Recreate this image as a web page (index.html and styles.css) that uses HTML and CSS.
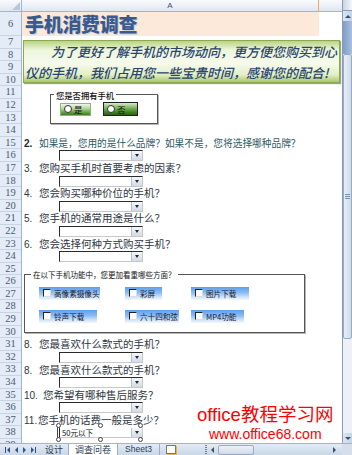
FILE: index.html
```html
<!DOCTYPE html>
<html lang="zh-CN">
<head>
  <meta charset="UTF-8">
  <title>手机消费调查</title>
  <link rel="stylesheet" href="styles.css">
</head>
<body>
  <div class="excel">
    <div class="colhead">
      <div class="corner"></div>
      <div class="col-a">A</div>
      <div class="col-rest"></div>
    </div>

    <div class="vscroll">
      <div class="split"></div>
      <div class="sbtn"><span class="tri up"></span></div>
      <div class="track-top"></div>
      <div class="thumb"><span class="grip"></span></div>
      <div class="track-bottom"></div>
      <div class="sbtn"><span class="tri down"></span></div>
    </div>

    <div class="sheet">
      <div class="rowheads">
        <div class="rh big">6</div>
        <div class="rh">7</div>
        <div class="rh">8</div>
        <div class="rh">9</div>
        <div class="rh">10</div>
        <div class="rh">11</div>
        <div class="rh">12</div>
        <div class="rh">13</div>
        <div class="rh">14</div>
        <div class="rh">15</div>
        <div class="rh">16</div>
        <div class="rh">17</div>
        <div class="rh">18</div>
        <div class="rh">19</div>
        <div class="rh">20</div>
        <div class="rh">21</div>
        <div class="rh">22</div>
        <div class="rh">23</div>
        <div class="rh">24</div>
        <div class="rh">25</div>
        <div class="rh">26</div>
        <div class="rh">27</div>
        <div class="rh">28</div>
        <div class="rh">29</div>
        <div class="rh">30</div>
        <div class="rh">31</div>
        <div class="rh">32</div>
        <div class="rh">33</div>
        <div class="rh">34</div>
        <div class="rh">35</div>
        <div class="rh">36</div>
        <div class="rh">37</div>
        <div class="rh">38</div>
        <div class="rh">39</div>
      </div>

      <div class="cells">
        <div class="title-row"><span class="title">手机消费调查</span></div>

        <div class="banner-rows">
          <div class="banner">
            <p class="l1">为了更好了解手机的市场动向，更方便您购买到心</p>
            <p class="l2">仪的手机，我们占用您一些宝贵时间，感谢您的配合!</p>
          </div>
        </div>

        <div class="group-rows">
          <fieldset class="grp own">
            <legend>您是否拥有手机</legend>
            <div class="opts">
              <div class="opt"><span class="radio"></span>是</div>
              <div class="opt on"><span class="radio"></span>否</div>
            </div>
          </fieldset>
        </div>

        <div class="row"></div>
        <div class="row q first"><b class="n">2.</b>如果是，您用的是什么品牌？如果不是，您将选择哪种品牌？</div>
        <div class="row"><div class="combo"><span class="val"></span><span class="arrow"></span></div></div>
        <div class="row q"><span class="n">3.</span>您购买手机时首要考虑的因素？</div>
        <div class="row"><div class="combo"><span class="val"></span><span class="arrow"></span></div></div>
        <div class="row q"><span class="n">4.</span>您会购买哪种价位的手机？</div>
        <div class="row"><div class="combo"><span class="val"></span><span class="arrow"></span></div></div>
        <div class="row q"><span class="n">5.</span>您手机的通常用途是什么？</div>
        <div class="row"><div class="combo"><span class="val"></span><span class="arrow"></span></div></div>
        <div class="row q"><span class="n">6.</span>您会选择何种方式购买手机？</div>
        <div class="row"><div class="combo"><span class="val"></span><span class="arrow"></span></div></div>

        <div class="func-rows">
          <fieldset class="grp func">
            <legend>在以下手机功能中，您更加看重哪些方面？</legend>
            <div class="checks">
              <div class="chk"><span class="box"></span>高像素摄像头</div>
              <div class="chk"><span class="box"></span>彩屏</div>
              <div class="chk"><span class="box"></span>图片下载</div>
              <div class="chk"><span class="box"></span>铃声下载</div>
              <div class="chk"><span class="box"></span>六十四和弦</div>
              <div class="chk"><span class="box"></span>MP4功能</div>
            </div>
          </fieldset>
        </div>

        <div class="row q"><span class="n">8.</span>您最喜欢什么款式的手机？</div>
        <div class="row"><div class="combo"><span class="val"></span><span class="arrow"></span></div></div>
        <div class="row q"><span class="n">8.</span>您最喜欢什么款式的手机？</div>
        <div class="row"><div class="combo"><span class="val"></span><span class="arrow"></span></div></div>
        <div class="row q"><span class="n wide">10.</span>您希望有哪种售后服务？</div>
        <div class="row"><div class="combo"><span class="val"></span><span class="arrow"></span></div></div>
        <div class="row q"><span class="n tight">11.</span>您手机的话费一般是多少？</div>
        <div class="row">
          <div class="combo selected">
            <span class="val">50元以下</span><span class="arrow"></span>
            <i class="h tl"></i><i class="h tc"></i><i class="h tr"></i>
            <i class="h bl"></i><i class="h bc"></i><i class="h br"></i>
          </div>
        </div>
        <div class="row"></div>
      </div>
    </div>

    <div class="tabbar">
      <div class="nav">
        <span class="nv first"></span>
        <span class="nv prev"></span>
        <span class="nv next"></span>
        <span class="nv last"></span>
      </div>
      <div class="tab">设计</div>
      <div class="tab active">调查问卷</div>
      <div class="tab sheet3">Sheet3</div>
      <div class="tab add"><span class="newsheet"></span></div>
      <div class="hscroll">
        <span class="hsplit"></span>
        <span class="tri left"></span>
        <span class="hthumb"></span>
        <span class="htrack"></span>
        <span class="tri right"></span>
      </div>
      <div class="corner-box"></div>
    </div>

    <div class="watermark">
      <div class="wm-big">office教程学习网</div>
      <div class="wm-url">www.office68.com</div>
    </div>
  </div>
</body>
</html>
```

FILE: styles.css
```css
body {
  margin: 0;
  background: #fff;
  font-family: "Noto Sans CJK SC", sans-serif;
}

.excel {
  width: 352px;
  height: 455px;
  display: grid;
  grid-template-columns: 342px 10px;
  grid-template-rows: 12px 431px 12px;
  overflow: hidden;
  position: relative;
}

/* small triangles used by scroll bars and sheet navigation */
.tri {
  width: 0;
  height: 0;
  border-style: solid;
  border-color: transparent;
}

.tri.up { border-width: 0 3px 3px 3px; border-bottom-color: #3c4f6b; }
.tri.down { border-width: 3px 3px 0 3px; border-top-color: #3c4f6b; }
.tri.left { border-width: 3px 3px 3px 0; border-right-color: #3c4f6b; }
.tri.right { border-width: 3px 0 3px 3px; border-left-color: #3c4f6b; }

/* column header */
.colhead {
  grid-column: 1;
  grid-row: 1;
  display: flex;
  background: linear-gradient(#f9fbfd, #dfe7f1);
  border-bottom: 1px solid #9eb6ce;
  box-sizing: border-box;
}

.corner {
  width: 22px;
  border-right: 1px solid #9eb6ce;
  box-sizing: border-box;
  display: flex;
  justify-content: flex-end;
  align-items: flex-end;
}

.corner::after {
  content: "";
  border-style: solid;
  border-width: 0 0 8px 8px;
  border-color: transparent transparent #b8c8dc transparent;
  margin: 0 1px 1px 0;
}

.col-a {
  width: 297px;
  text-align: center;
  font: 8px "Liberation Sans", sans-serif;
  line-height: 11px;
  color: #3f5068;
  border-right: 1px solid #f0a862;
  box-sizing: border-box;
}

.col-rest {
  flex: 1;
}

/* vertical scroll bar */
.vscroll {
  grid-column: 2;
  grid-row: 1 / 3;
  display: flex;
  flex-direction: column;
  background: #e9eef5;
  border-left: 1px solid #8a9bb3;
  box-sizing: border-box;
}

.split {
  height: 10px;
  background: linear-gradient(90deg, #c9d5e4, #f4f7fb);
  border-bottom: 1px solid #8a9bb3;
}

.sbtn {
  height: 10px;
  display: flex;
  align-items: center;
  justify-content: center;
  background: linear-gradient(90deg, #dce6f2, #c4d3e6);
}

.track-top {
  height: 33px;
  background: linear-gradient(90deg, #7e9cc6, #a9c0de);
}

.thumb {
  height: 285px;
  background: linear-gradient(90deg, #e8eef6, #cfdbea);
  border: 1px solid #98abc4;
  border-radius: 2px;
  box-sizing: border-box;
  display: flex;
  align-items: center;
  justify-content: center;
}

.grip {
  width: 5px;
  height: 5px;
  background: repeating-linear-gradient(#7d90aa 0 1px, transparent 1px 2px);
}

.track-bottom {
  flex: 1;
  background: #edf1f7;
}

/* sheet */
.sheet {
  grid-column: 1;
  grid-row: 2;
  display: flex;
  overflow: hidden;
}

.rowheads {
  width: 22px;
  flex: none;
  background: #e4ecf7;
  border-right: 1px solid #9eb6ce;
  box-sizing: border-box;
}

.rh {
  height: 12.6px;
  box-sizing: border-box;
  border-bottom: 1px solid #c6d4e4;
  font: 10.5px "Liberation Serif", serif;
  line-height: 12px;
  text-align: center;
  color: #4b5b70;
  overflow: hidden;
}

.rh.big {
  height: 24px;
  line-height: 24px;
}

.cells {
  width: 320px;
  flex: none;
}

.title-row {
  height: 24px;
  width: 297px;
  background: #fde9d9;
}

.title {
  display: block;
  margin-left: 3px;
  font-size: 19px;
  font-weight: 900;
  line-height: 24px;
  letter-spacing: -0.3px;
  color: #3a5a8c;
  text-shadow: 1px 1px 0 #c9d1dd;
}

.banner-rows {
  height: 50.4px;
  padding-top: 4px;
  box-sizing: border-box;
}

.banner {
  margin-left: 1px;
  width: 317px;
  height: 43px;
  box-sizing: border-box;
  border: 1px solid #8ea84f;
  background: linear-gradient(#b9d482, #eef6dc 22%, #f6faec 55%, #e3efc6 82%, #aac96e);
  box-shadow: 1px 1px 1px #9aa88a;
  font-size: 13px;
  font-style: italic;
  font-weight: 500;
  color: #29446f;
}

.banner p {
  margin: 0;
  white-space: nowrap;
  line-height: 21px;
}

.banner .l1 {
  padding-left: 27px;
}

.banner .l2 {
  padding-left: 1px;
}

/* group boxes */
.grp {
  margin: 0;
  padding: 0;
  border: 1px solid #555;
  box-shadow: 1px 1px 0 #b5b5b5;
  box-sizing: border-box;
  overflow: hidden;
}

.grp legend {
  padding: 0 2px;
  color: #111;
}

.group-rows {
  height: 37.8px;
  padding-top: 3.6px;
  box-sizing: border-box;
}

.own {
  margin-left: 28px;
  width: 108px;
  height: 34px;
  padding-left: 3px;
}

.own legend {
  font-size: 8.3px;
  line-height: 10px;
  font-weight: 500;
}

.opts {
  display: flex;
  gap: 12px;
  margin: 3px 0 0 6px;
}

.opt {
  width: 31px;
  height: 13px;
  box-sizing: border-box;
  display: flex;
  align-items: center;
  gap: 2px;
  padding-left: 3px;
  font-size: 8.5px;
  color: #111;
  background: linear-gradient(#eef7e4, #b4d99a 40%, #5f9a3c 80%, #3f7a24);
  border: 1px solid #8fb57a;
}

.opt.on {
  width: 35px;
  height: 14px;
  margin-top: -1px;
  border: 1px solid #222;
  background: linear-gradient(#d8eccb, #7fb85d 40%, #3c7a22 80%, #2a5f14);
}

.radio {
  width: 6px;
  height: 6px;
  border-radius: 50%;
  background: #fff;
  border: 1px solid #333;
}

.row {
  display: flow-root;
  height: 12.6px;
  white-space: nowrap;
}

.q {
  padding-left: 2px;
  font-size: 10.5px;
  line-height: 12.6px;
  color: #30363f;
}

.q.first {
  font-size: 9.7px;
  color: #2d5a62;
}

.n {
  display: inline-block;
  width: 15px;
  font-family: "Liberation Sans", sans-serif;
  font-size: 10px;
}

.n.wide {
  width: 19px;
}

.n.tight {
  width: 14px;
}

.q.first .n {
  color: #1d2a2e;
}

/* drop downs */
.combo {
  position: relative;
  margin: 1px 0 0 37px;
  width: 84px;
  height: 11px;
  box-sizing: border-box;
  display: flex;
  justify-content: space-between;
  background: #fff;
  border-style: solid;
  border-width: 1px;
  border-color: #2b2b2b #c8c8c8 #c8c8c8 #2b2b2b;
}

.val {
  font-size: 7.6px;
  line-height: 9px;
  padding-left: 2px;
  color: #111;
}

.arrow {
  width: 10px;
  background: linear-gradient(#f5f7fa, #d3dae4);
  border-left: 1px solid #b8c2cf;
  display: flex;
  align-items: center;
  justify-content: center;
}

.arrow::after {
  content: "";
  border-style: solid;
  border-width: 3px 2.5px 0 2.5px;
  border-color: #1f2a3a transparent transparent transparent;
}

.combo.selected {
  border-top-color: #fff;
}

.h {
  position: absolute;
  width: 3px;
  height: 3px;
  border-radius: 50%;
  background: #fff;
  border: 1px solid #444;
}

.h.tl { left: -4px; top: -5px; }
.h.tc { left: 38px; top: -5px; }
.h.tr { right: -1px; top: -5px; }
.h.bl { left: -4px; bottom: -5px; }
.h.bc { left: 38px; bottom: -5px; }
.h.br { right: -1px; bottom: -5px; }

.combo.selected::before {
  content: "";
  position: absolute;
  left: -3px;
  top: -3px;
  bottom: -3px;
  width: 2px;
  border: 1px solid #444;
  border-right: none;
}

/* functions box */
.func-rows {
  height: 75.6px;
  padding-top: 7.7px;
  box-sizing: border-box;
}

.func {
  margin-left: 2px;
  width: 281px;
  height: 62.5px;
  padding-left: 6px;
}

.func legend {
  font-size: 7.5px;
  line-height: 9px;
}

.checks {
  display: grid;
  grid-template-columns: 86px 66px auto;
  row-gap: 10px;
  margin: 7.5px 0 0 8px;
  justify-items: start;
}

.chk {
  height: 13px;
  box-sizing: border-box;
  display: flex;
  align-items: center;
  gap: 3px;
  padding-left: 4px;
  white-space: nowrap;
  font-size: 7.6px;
  color: #16202c;
  background: linear-gradient(#5e9ef0, #8ebdf4 45%, #d6e6fa 80%, #f4f8fd);
}

.chk:nth-child(1) { min-width: 61px; }
.chk:nth-child(2) { min-width: 37px; }
.chk:nth-child(3) { min-width: 58px; }
.chk:nth-child(4) { min-width: 58px; }
.chk:nth-child(5) { min-width: 54px; }
.chk:nth-child(6) { min-width: 53px; }

.box {
  width: 6px;
  height: 6px;
  background: #fff;
  border-style: solid;
  border-width: 1px;
  border-color: #222 #ddd #ddd #222;
}

/* tab bar */
.tabbar {
  grid-column: 1 / 3;
  grid-row: 3;
  display: flex;
  align-items: stretch;
  background: linear-gradient(#e3ebf5, #c9d7e8);
  border-top: 1px solid #9eb6ce;
  box-sizing: border-box;
  font-size: 9px;
  color: #2c3e57;
  position: relative;
  z-index: 1;
}

.nav {
  width: 40px;
  display: flex;
  align-items: center;
  justify-content: space-around;
  padding: 0 2px;
  box-sizing: border-box;
}

.nv {
  display: flex;
  align-items: center;
  height: 6px;
}

.nv::before {
  content: "";
  border-style: solid;
  border-color: transparent;
}

.nv.first::before,
.nv.prev::before {
  border-width: 3px 3px 3px 0;
  border-right-color: #2e5384;
}

.nv.next::before,
.nv.last::before {
  border-width: 3px 0 3px 3px;
  border-left-color: #2e5384;
}

.nv.first {
  border-left: 1px solid #2e5384;
  padding-left: 1px;
}

.nv.last {
  border-right: 1px solid #2e5384;
  padding-right: 1px;
}

.tab {
  padding: 0 5px;
  line-height: 11px;
  border-right: 1px solid #9aaec8;
  white-space: nowrap;
}

.tab:first-of-type {
  border-left: 1px solid #9aaec8;
}

.tab.active {
  background: #fff;
  padding: 0 6px;
}

.tab.sheet3 {
  font-family: "Liberation Sans", sans-serif;
  font-size: 8.5px;
  padding: 0 7px;
}

.tab.add {
  display: flex;
  align-items: center;
  padding: 0 6px;
  border-right: none;
}

.newsheet {
  width: 8px;
  height: 7px;
  background: #fff;
  border: 1px solid #8a7a40;
  box-shadow: 1px 1px 0 #e6b640;
}

.hscroll {
  margin-left: auto;
  width: 137px;
  display: flex;
  align-items: center;
  gap: 4px;
  padding-right: 6px;
  box-sizing: border-box;
}

.hsplit {
  width: 2px;
  height: 9px;
  background: repeating-linear-gradient(#6b7f99 0 1px, transparent 1px 2px);
}

.hthumb {
  width: 34px;
  height: 8px;
  border: 1px solid #98abc4;
  border-radius: 2px;
  background: linear-gradient(#eef2f8, #cfd9e7);
}

.htrack {
  flex: 1;
}

.corner-box {
  width: 10px;
  background: #d5deea;
}

/* watermark */
.watermark {
  position: absolute;
  left: 197px;
  top: 403px;
  color: #ff0000;
  z-index: 2;
}

.wm-big {
  font-family: "Liberation Sans", "Noto Sans CJK SC", sans-serif;
  font-size: 18.5px;
  line-height: 24px;
  white-space: nowrap;
}

.wm-url {
  margin-left: 12px;
  font: 14px "Liberation Sans", sans-serif;
  line-height: 15px;
}
```
